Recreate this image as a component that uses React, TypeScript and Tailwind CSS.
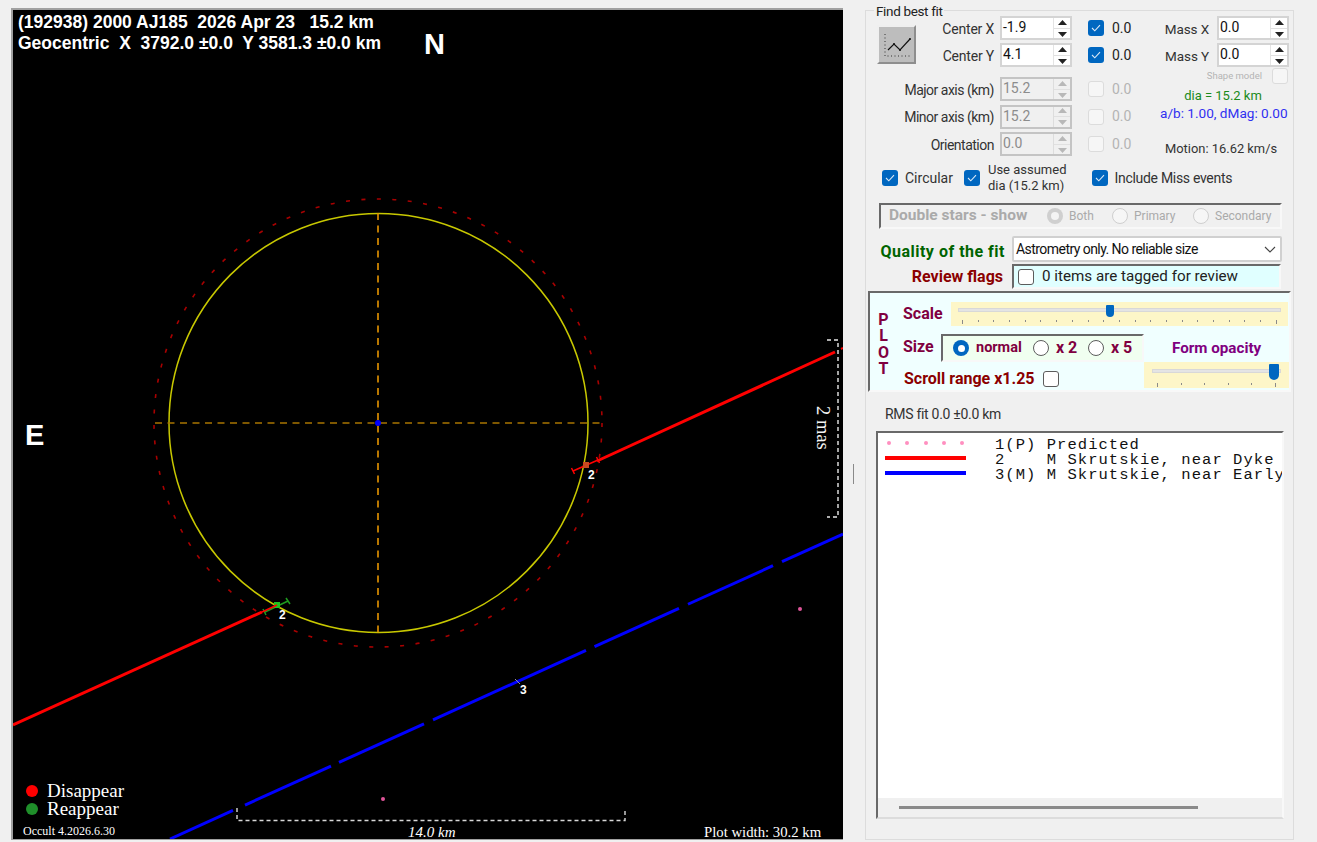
import React from "react";

// y on the blue chord for a given x
const blueY = (x: number) => 534 + (843 - x) * 0.4532;
const blueSegments = [
  [843, 782],
  [773, 688],
  [679, 594.5],
  [586, 433],
  [424, 339],
  [331, 245],
  [233, 170],
];

const Spin = ({ value, disabled = false }: { value: string; disabled?: boolean }) => (
  <div
    className={`flex w-[72px] h-[24px] border-2 ${
      disabled ? "border-[#c4c4c4] bg-[#f0f0f0] text-[#8c8c8c]" : "border-[#d4d4d4] bg-white text-[#111]"
    }`}
  >
    <span className="flex-1 pl-[1px] leading-[19px] text-[14px]">{value}</span>
    <div className={`w-[17px] flex flex-col items-center justify-center gap-[3px] border-l ${disabled ? "border-[#dddddd]" : "border-[#e4e4e4]"}`}>
      <svg width="9" height="5" viewBox="0 0 9 5">
        <path d="M4.5 0 L9 5 L0 5 Z" fill={disabled ? "#b8b8b8" : "#222"} />
      </svg>
      <div className="w-full h-px bg-[#e0e0e0]" />
      <svg width="9" height="5" viewBox="0 0 9 5">
        <path d="M0 0 L9 0 L4.5 5 Z" fill={disabled ? "#b8b8b8" : "#222"} />
      </svg>
    </div>
  </div>
);

const Check = ({ on = false, dim = false }: { on?: boolean; dim?: boolean }) =>
  on ? (
    <div className="w-[16px] h-[16px] shrink-0 rounded-[3px] bg-[#0067c0] flex items-center justify-center">
      <svg width="10" height="8" viewBox="0 0 10 8" fill="none">
        <path d="M1 4 L3.8 6.8 L9 1.2" stroke="#dbe9f6" strokeWidth="1.1" />
      </svg>
    </div>
  ) : (
    <div
      className={`w-[16px] h-[16px] shrink-0 rounded-[3px] border ${
        dim ? "border-[#dcdcdc] bg-[#f6f6f6]" : "border-[#5c5c5c] bg-white"
      }`}
    />
  );

const Radio = ({ on = false, dim = false }: { on?: boolean; dim?: boolean }) => {
  if (on && dim)
    return (
      <div className="w-[16px] h-[16px] shrink-0 rounded-full bg-[#cfcfcf] flex items-center justify-center">
        <div className="w-[8px] h-[8px] rounded-full bg-[#f4f4f4]" />
      </div>
    );
  if (on)
    return (
      <div className="w-[16px] h-[16px] shrink-0 rounded-full bg-[#0067c0] flex items-center justify-center">
        <div className="w-[7px] h-[7px] rounded-full bg-white" />
      </div>
    );
  return (
    <div
      className={`w-[16px] h-[16px] shrink-0 rounded-full border ${
        dim ? "border-[#cfcfcf] bg-[#f6f6f6]" : "border-[#5c5c5c] bg-white"
      }`}
    />
  );
};

const FitRow = ({
  label,
  value,
  w,
  disabled = false,
  className = "",
}: {
  label: string;
  value: string;
  w: string;
  disabled?: boolean;
  className?: string;
}) => (
  <div className={`flex items-center h-[24px] ${className}`}>
    <span className={`${w} pt-[2px] text-right text-[#333] text-[14px] ${disabled ? "tracking-[-0.5px]" : "tracking-[-0.2px]"}`}>{label}</span>
    <div className="ml-[6px]">
      <Spin value={value} disabled={disabled} />
    </div>
    <div className="ml-[16px]">
      <Check on={!disabled} dim={disabled} />
    </div>
    <span className={`ml-[8px] text-[14px] ${disabled ? "text-[#b4b4b4]" : "text-[#222]"}`}>0.0</span>
  </div>
);

const MassRow = ({ label, value, className = "" }: { label: string; value: string; className?: string }) => (
  <div className={`flex items-center h-[24px] ${className}`}>
    <span className="w-[59px] pt-[3px] text-right text-[13.5px] text-[#333] tracking-[-0.1px]">{label}</span>
    <div className="ml-[8px]">
      <Spin value={value} />
    </div>
  </div>
);

const Ticks = ({ count, className }: { count: number; className: string }) => (
  <div className={`flex justify-between ${className}`}>
    {Array.from({ length: count }).map((_, i) => (
      <div key={i} className={`w-px ${i === 0 || i === count - 1 ? "h-[4px]" : "h-[2px]"} bg-[#8a8a8a]`} />
    ))}
  </div>
);

const PlotArea = () => (
  <div className="relative w-[830px] h-[829px] bg-black overflow-hidden">
    <svg width="830" height="829" viewBox="13 10 830 829" className="block">
      <circle cx="378" cy="423" r="224" fill="none" stroke="#a80000" strokeWidth="1.6" strokeDasharray="4 11.5" />
      <circle cx="378.5" cy="423" r="209.5" fill="none" stroke="#c8c800" strokeWidth="1.5" />
      <line x1="378" y1="213" x2="378" y2="633" stroke="#e69500" strokeWidth="1.6" strokeDasharray="7 5.5" />
      <line x1="155" y1="423" x2="603" y2="423" stroke="#a87400" strokeWidth="1.6" strokeDasharray="7 5.5" />
      <circle cx="378" cy="423" r="3" fill="#0000ff" />

      {/* chords */}
      <line x1="835" y1="352" x2="597" y2="461" stroke="#ff0000" strokeWidth="3" />
      <line x1="841" y1="349" x2="843" y2="348" stroke="#ff0000" strokeWidth="2" />
      <line x1="262" y1="612" x2="13" y2="725" stroke="#ff0000" strokeWidth="3" />
      {blueSegments.map(([a, b]) => (
        <line key={a} x1={a} y1={blueY(a)} x2={b} y2={blueY(b)} stroke="#0000ff" strokeWidth="3" />
      ))}

      {/* disappear marker */}
      <path d="M573 471 L598 460 M571.5 468 L574.5 474 M596.5 457 L599.5 463" stroke="#ff0000" strokeWidth="1.5" fill="none" />
      <rect x="583" y="462" width="6" height="6" fill="#c84a20" />
      {/* reappear marker */}
      <path d="M265 612 L288 601 M263 609 L266 615 M286 598 L290 604" stroke="#1f9c1f" strokeWidth="1.5" fill="none" />
      <rect x="274" y="602" width="6" height="6" fill="#1fc01f" />
      <line x1="262" y1="612" x2="277" y2="605" stroke="#ff0000" strokeWidth="1.5" />
      {/* miss marker */}
      <line x1="515" y1="679" x2="520" y2="684" stroke="#8a8aa8" strokeWidth="1" />

      <circle cx="800" cy="609" r="2" fill="#e0559a" />
      <circle cx="383" cy="799" r="2" fill="#e0559a" />

      {/* scale bars */}
      <path d="M827 340 H838 V517 H827" fill="none" stroke="#e8e8e8" strokeWidth="1.4" strokeDasharray="4 3" />
      <path d="M237 808 V820.5 H625 V808" fill="none" stroke="#d8d8d8" strokeWidth="1.4" strokeDasharray="4 3" />

      <circle cx="32" cy="791" r="6" fill="#ff0000" />
      <circle cx="32" cy="809" r="6" fill="#1f8f2a" />
    </svg>

    <div className="absolute left-[5px] top-[2px] text-white font-bold text-[17.5px] leading-[21px] whitespace-pre font-['Liberation_Sans',sans-serif]">
      <div>(192938) 2000 AJ185  2026 Apr 23   15.2 km</div>
      <div>Geocentric  X  3792.0 ±0.0  Y 3581.3 ±0.0 km</div>
    </div>
    <span className="absolute left-[411px] top-[18px] text-white font-bold text-[29px] leading-[32px] font-['Liberation_Sans',sans-serif]">N</span>
    <span className="absolute left-[12px] top-[409px] text-white font-bold text-[29px] leading-[32px] font-['Liberation_Sans',sans-serif]">E</span>

    <span className="absolute left-[575px] top-[459px] text-white font-bold text-[12px] leading-[12px] font-['Liberation_Sans',sans-serif]">2</span>
    <span className="absolute left-[266px] top-[599px] text-white font-bold text-[12px] leading-[12px] font-['Liberation_Sans',sans-serif]">2</span>
    <span className="absolute left-[507px] top-[674px] text-white font-bold text-[12px] leading-[12px] font-['Liberation_Sans',sans-serif]">3</span>

    <span className="absolute left-[800px] top-[396px] text-[#f4f4f4] text-[18.5px] leading-[20px] [writing-mode:vertical-rl] font-['Liberation_Serif',serif]">2 mas</span>

    <div className="absolute left-[34px] top-[772px] text-white text-[19px] leading-[18px] font-['Liberation_Serif',serif]">
      <div>Disappear</div>
      <div>Reappear</div>
    </div>
    <span className="absolute left-[10px] top-[815px] text-white text-[12px] leading-[13px] font-['Liberation_Serif',serif]">Occult 4.2026.6.30</span>
    <span className="absolute left-[395px] top-[816px] text-white italic text-[15px] leading-[13px] font-['Liberation_Serif',serif]">14.0 km</span>
    <span className="absolute left-[691px] top-[816px] text-white text-[14.75px] leading-[13px] font-['Liberation_Serif',serif]">Plot width: 30.2 km</span>
  </div>
);

const TopControls = () => (
  <div className="flex h-[148px]">
    <div className="w-[284px] shrink-0 pt-[5px]">
      <div className="flex">
        <div className="ml-[11px] mt-[9px] w-[39px] h-[39px] shrink-0 bg-[#bdbdbd] border-2 border-t-[#efefef] border-l-[#efefef] border-r-[#8e8e8e] border-b-[#8e8e8e]">
          <svg width="35" height="35" viewBox="0 0 35 35" fill="none">
            <path d="M6 7 V29 H32" stroke="#333" strokeWidth="1" strokeDasharray="1 2.5" />
            <path d="M9 23 L15 17 L21 23 L31 12" stroke="#111" strokeWidth="1.2" />
            <circle cx="15" cy="17" r="1" fill="#111" />
            <circle cx="21" cy="23" r="1" fill="#111" />
            <circle cx="31" cy="12" r="1" fill="#111" />
          </svg>
        </div>
        <div className="flex flex-col gap-[3px]">
          <FitRow label="Center X" value="-1.9" w="w-[78px]" />
          <FitRow label="Center Y" value="4.1" w="w-[78px]" />
        </div>
      </div>
      <div className="ml-[11px] mt-[10px] flex flex-col gap-[3.5px]">
        <FitRow label="Major axis (km)" value="15.2" w="w-[117px]" disabled />
        <FitRow label="Minor axis (km)" value="15.2" w="w-[117px]" disabled />
        <FitRow label="Orientation" value="0.0" w="w-[117px]" disabled />
      </div>
    </div>
    <div className="flex-1 min-w-0 pt-[5px] pl-[8px]">
      <div className="flex flex-col gap-[3px] -ml-[8px]">
        <MassRow label="Mass X" value="0.0" />
        <MassRow label="Mass Y" value="0.0" />
      </div>
      <div className="flex items-center justify-end h-[16px] mt-[1px] pr-[5px]">
        <span className="text-[9.5px] text-[#b4b4b4] mr-[10px]">Shape model</span>
        <Check dim />
      </div>
      <div className="text-center text-[13px] leading-[16px] mt-[4px] text-[#1a8a1a] -ml-[2px] w-[134px]">dia = 15.2 km</div>
      <div className="text-[13.6px] leading-[16px] mt-[1px] text-[#3030f0] whitespace-nowrap ml-[2px]">a/b: 1.00, dMag: 0.00</div>
      <div className="text-[12.9px] leading-[16px] mt-[20px] text-[#333] whitespace-nowrap ml-[7px]">Motion: 16.62 km/s</div>
    </div>
  </div>
);

const CheckOptions = () => (
  <div className="flex items-center h-[38px] text-[14px] text-[#333]">
    <div className="ml-[16px]"><Check on /></div>
    <span className="ml-[7px]">Circular</span>
    <div className="ml-[11px]"><Check on /></div>
    <span className="ml-[8px] text-[13px] leading-[16px]">Use assumed<br />dia (15.2 km)</span>
    <div className="ml-[25px]"><Check on /></div>
    <span className="ml-[7px] tracking-[-0.3px]">Include Miss events</span>
  </div>
);

const DoubleStars = () => (
  <div className="ml-[13px] mt-[6px] w-[403px] h-[26px] flex items-center border-2 border-t-[#696969] border-l-[#696969] border-r-[#f8f8f8] border-b-[#f8f8f8] text-[#aaaaaa]">
    <span className="ml-[8px] w-[158px] font-bold text-[15.5px] whitespace-nowrap">Double stars - show</span>
    <Radio on dim />
    <span className="ml-[6px] w-[43px] text-[12px]">Both</span>
    <Radio dim />
    <span className="ml-[6px] w-[59px] text-[12px]">Primary</span>
    <Radio dim />
    <span className="ml-[6px] text-[12px]">Secondary</span>
  </div>
);

const FitQuality = () => (
  <div>
    <div className="flex items-center mt-[7px] h-[26px]">
      <span className="w-[139px] pt-[5px] text-right font-bold text-[16px] tracking-[0.5px] text-[#006400] whitespace-nowrap">Quality of the fit</span>
      <div className="ml-[7px] w-[270px] h-[26px] bg-white border-2 border-[#d0d0d0] rounded-[2px] flex items-center justify-between pl-[2px] pr-[4px]">
        <span className="text-[14px] text-[#111] tracking-[-0.55px] whitespace-nowrap">Astrometry only. No reliable size</span>
        <svg width="12" height="7" viewBox="0 0 12 7" fill="none">
          <path d="M1 1 L6 6 L11 1" stroke="#444" strokeWidth="1.1" />
        </svg>
      </div>
    </div>
    <div className="flex items-center mt-[2px] h-[25px]">
      <span className="w-[137px] text-right font-bold text-[16px] text-[#8b0000] whitespace-nowrap">Review flags</span>
      <div className="ml-[9px] w-[269px] h-[25px] bg-[#e0ffff] border-2 border-t-[#696969] border-l-[#696969] border-r-[#f8f8f8] border-b-[#f8f8f8] flex items-center pl-[4px]">
        <Check />
        <span className="ml-[8px] text-[15.2px] text-[#222] whitespace-nowrap">0 items are tagged for review</span>
      </div>
    </div>
  </div>
);

const PlotOptions = () => (
  <div className="ml-[2px] mt-[2px] w-[423px] h-[101px] bg-[#f0ffff] border-2 border-t-[#696969] border-l-[#696969] border-r-[#f8f8f8] border-b-[#f8f8f8] flex">
    <div className="w-[33px] pr-[6px] pt-[19px] text-center font-bold text-[16px] leading-[16.3px] text-[#800040]">
      <div>P</div>
      <div>L</div>
      <div>O</div>
      <div>T</div>
    </div>
    <div className="flex-1 flex flex-col">
      <div className="flex h-[33px] pt-[9px]">
        <span className="w-[48px] h-[24px] leading-[24px] font-bold text-[16px] text-[#800040] shrink-0">Scale</span>
        <div className="w-[337px] h-[24px] bg-[#fdf6c8] relative px-[7px] pt-[6px]">
          <div className="h-[4px] bg-[#e4e4e4] border border-[#d8d8d8]" />
          <div className="absolute left-[155px] top-[3px] w-[8px] h-[12px] bg-[#0067c0] rounded-b-[4px] rounded-t-[1px]" />
          <Ticks count={21} className="mt-[8px] mx-[4px]" />
        </div>
      </div>
      <div className="flex h-[28px] mt-[8px]">
        <span className="w-[38px] leading-[26px] font-bold text-[16px] text-[#800040] shrink-0">Size</span>
        <div className="w-[203px] h-[28px] bg-[#f0fff0] border-2 border-t-[#696969] border-l-[#696969] border-r-[#f8f8f8] border-b-[#f8f8f8] flex items-center pl-[10px] text-[#800040] font-bold text-[14.5px]">
          <Radio on />
          <span className="ml-[7px] w-[50px]">normal</span>
          <div className="ml-[7px]"><Radio /></div>
          <span className="ml-[7px] w-[25px] whitespace-pre text-[16px]">x 2</span>
          <div className="ml-[7px]"><Radio /></div>
          <span className="ml-[7px] whitespace-pre text-[16px]">x 5</span>
        </div>
        <span className="ml-[28px] leading-[28px] font-bold text-[15.2px] text-[#800080] whitespace-nowrap">Form opacity</span>
      </div>
      <div className="flex h-[26px]">
        <span className="w-[140px] pl-[1px] leading-[34px] font-bold text-[16px] text-[#8b0000] whitespace-nowrap">Scroll range x1.25</span>
        <div className="pt-[9px] w-[101px]"><Check /></div>
        <div className="w-[145px] h-[26px] bg-[#fdf6c8] relative px-[8px] pt-[7px]">
          <div className="h-[4px] bg-[#e4e4e4] border border-[#d8d8d8]" />
          <div className="absolute left-[125px] top-[2px] w-[10px] h-[16px] bg-[#0067c0] rounded-b-[5px] rounded-t-[1px]" />
          <Ticks count={6} className="mt-[10px] mx-[5px]" />
        </div>
      </div>
    </div>
  </div>
);

const EventList = () => (
  <div className="ml-[10px] w-[408px] h-[388px] flex flex-col border-2 border-t-[#696969] border-l-[#696969] border-r-[#f8f8f8] border-b-[#dcdcdc] bg-[#f0f0f0]">
    <div className="h-[365px] bg-white pt-[2px] overflow-hidden flex">
      <div className="w-[117px] shrink-0 pl-[7px] flex flex-col">
        <div className="h-[15px] flex items-center justify-between w-[81px] px-[2px]">
          {[0, 1, 2, 3, 4].map((i) => (
            <div key={i} className="w-[4px] h-[4px] rounded-full bg-[#ff8fc0]" />
          ))}
        </div>
        <div className="h-[15px] flex items-center w-[81px]"><div className="w-full h-[4px] bg-[#ff0000]" /></div>
        <div className="h-[15px] flex items-center w-[81px]"><div className="w-full h-[4px] bg-[#0000ff]" /></div>
      </div>
      <div className="mt-[3px] font-['Liberation_Mono',monospace] text-[15.5px] tracking-[1.05px] leading-[15px] text-[#111] whitespace-pre">
        <div>1(P) Predicted</div>
        <div>2    M Skrutskie, near Dyke</div>
        <div>3(M) M Skrutskie, near Early</div>
      </div>
    </div>
    <div className="flex-1 pl-[21px] pt-[8px]">
      <div className="w-[299px] h-[3px] bg-[#8a8a8a]" />
    </div>
  </div>
);

const FitPanel = () => (
  <div className="relative mt-[10px] w-[429px] h-[830px] border border-[#dcdcdc]">
    <span className="absolute left-[8px] -top-[8px] px-[2px] bg-[#f0f0f0] text-[13.5px] leading-[16px] text-[#222] tracking-[-0.35px]">Find best fit</span>
    <TopControls />
    <CheckOptions />
    <DoubleStars />
    <FitQuality />
    <PlotOptions />
    <div className="ml-[19px] h-[39px] leading-[45px] text-[14px] text-[#333] tracking-[-0.3px]">RMS fit 0.0 ±0.0 km</div>
    <EventList />
  </div>
);

export default function App() {
  return (
    <div className="w-[1317px] h-[842px] overflow-hidden bg-[#f0f0f0] flex font-['Roboto',sans-serif]">
      <div className="ml-[11px] mt-[8px] h-[832px] border-t-[2px] border-l-[2px] border-b border-[#a0a0a0]">
        <PlotArea />
      </div>
      <div className="w-[22px] pr-[2px] flex items-center justify-center">
        <div className="w-[1px] h-[20px] bg-[#8a8a8a] mt-[106px]" />
      </div>
      <FitPanel />
    </div>
  );
}
